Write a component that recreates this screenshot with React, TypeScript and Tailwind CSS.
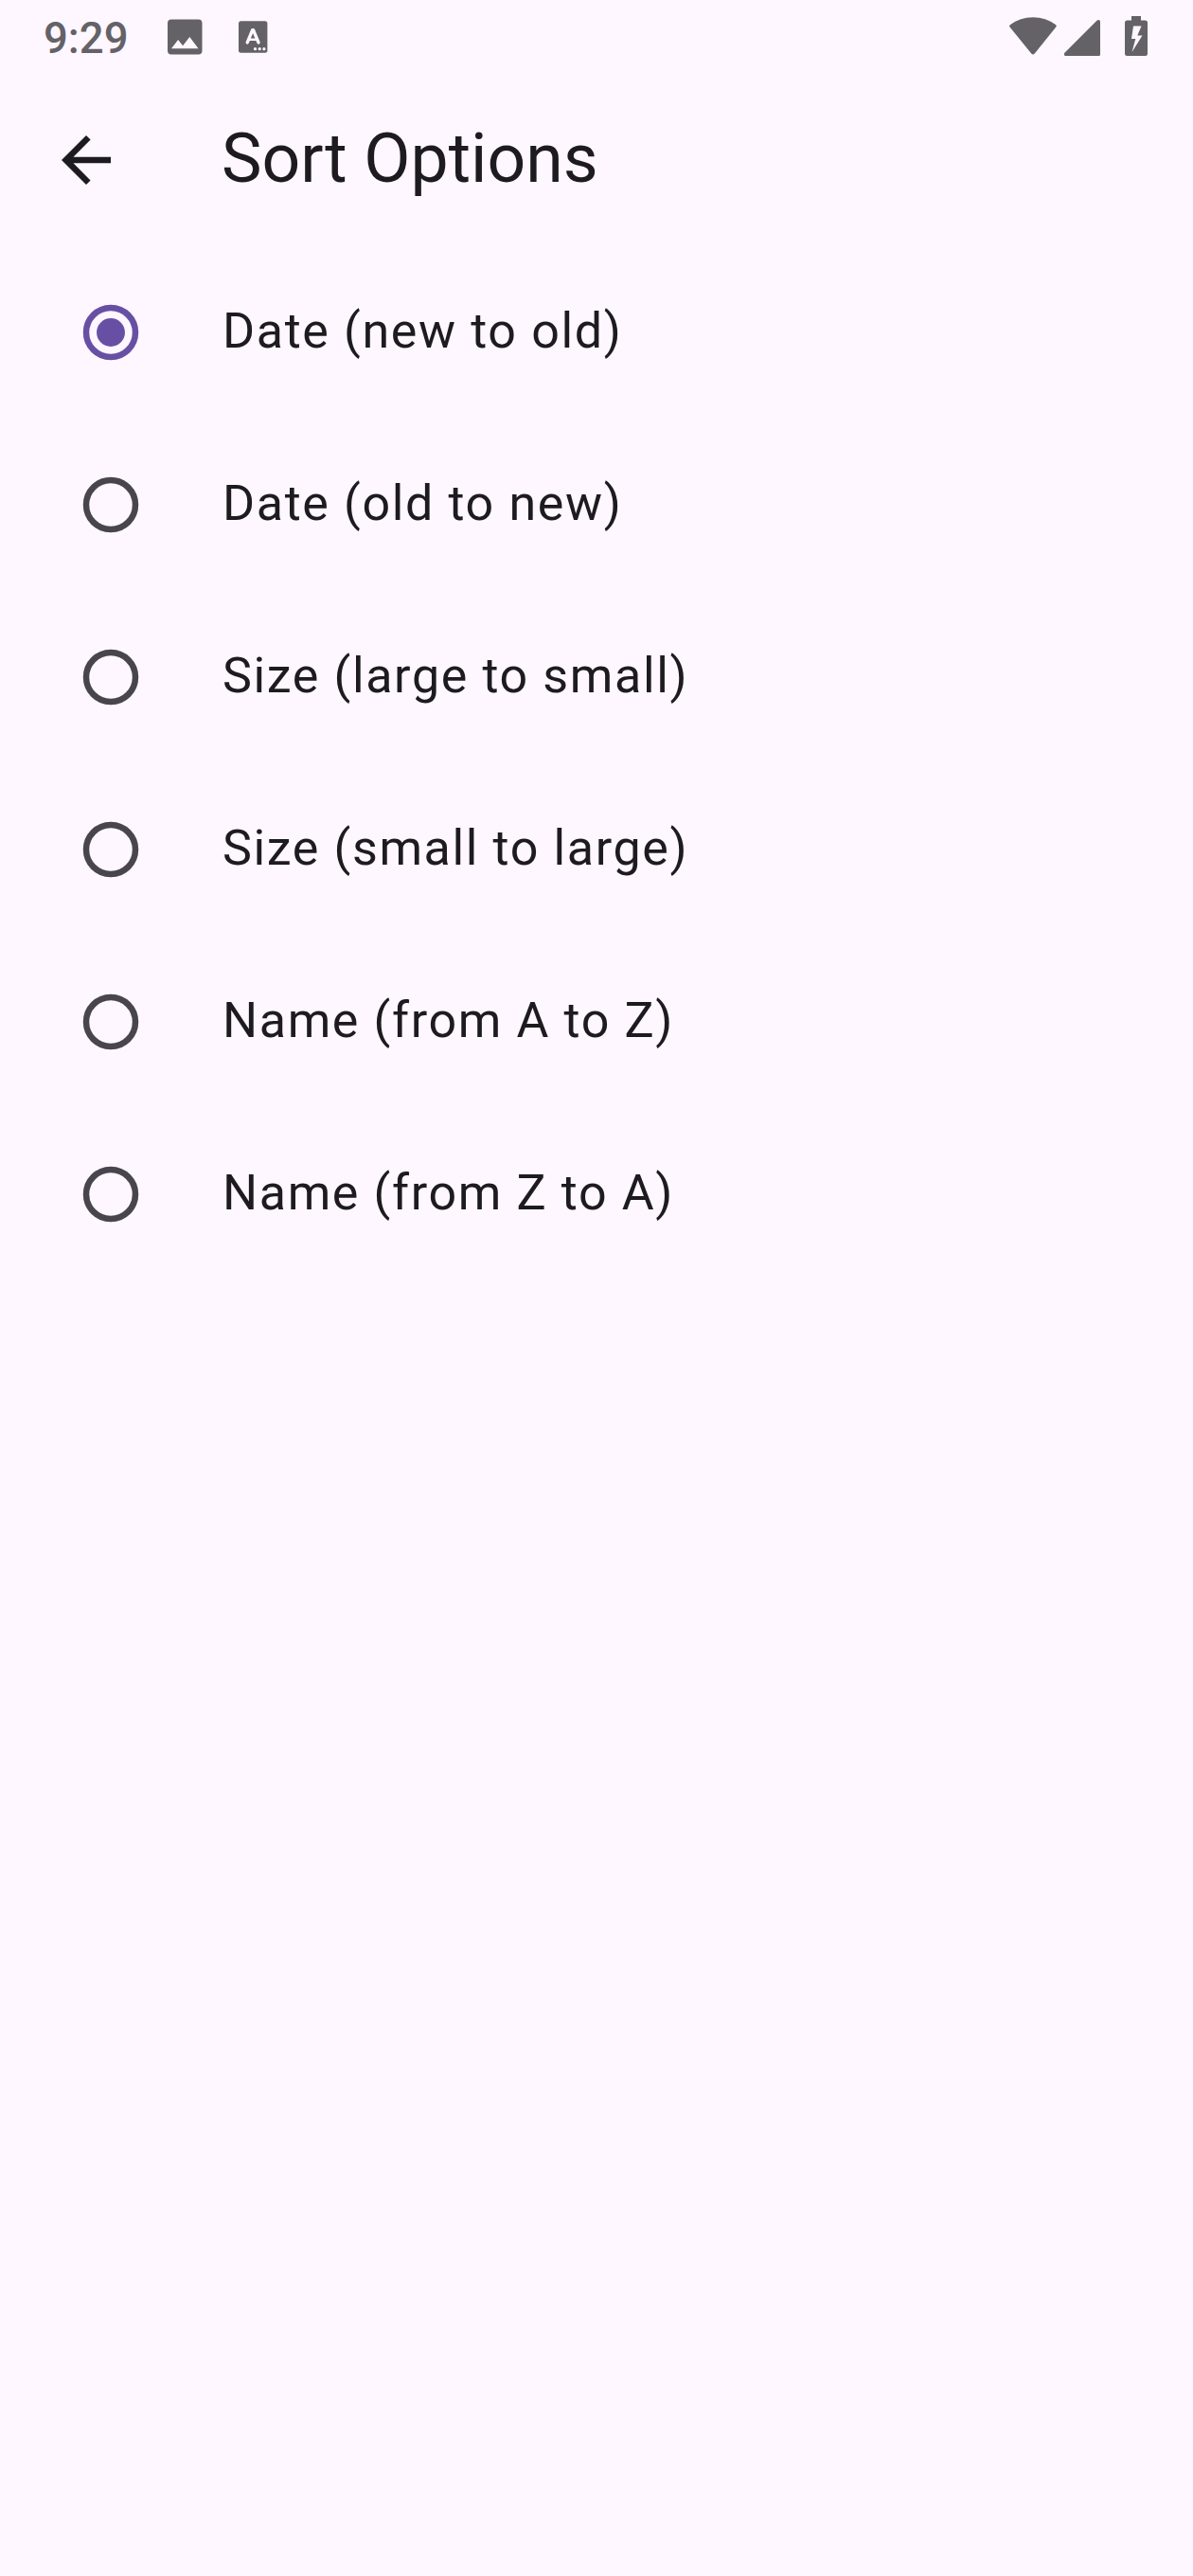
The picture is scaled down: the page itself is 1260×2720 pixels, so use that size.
import { useState } from "react";

const options = [
  "Date (new to old)",
  "Date (old to new)",
  "Size (large to small)",
  "Size (small to large)",
  "Name (from A to Z)",
  "Name (from Z to A)",
];

function StatusBar() {
  return (
    <div className="flex h-[78px] items-start justify-between pl-[46px] pr-[48px] text-[#646267]">
      <div className="flex items-start">
        <span className="mt-[14px] w-[131px] whitespace-nowrap text-[45.5px] font-medium leading-[53px]">9:29</span>
        <svg className="mt-[20px] h-[38px] w-[37px]" viewBox="0 0 37 38" fill="currentColor">
          <path fillRule="evenodd" d="M4 .5h28.5a4 4 0 0 1 4 4v29a4 4 0 0 1-4 4H4a4 4 0 0 1-4-4v-29a4 4 0 0 1 4-4ZM4 31.3h28.5L23.3 19l-7.2 9.2-5-6.1Z" />
        </svg>
        <svg className="ml-[38px] mt-[22px] h-[34px] w-[31px]" viewBox="0 0 31 34" fill="currentColor">
          <rect y=".3" width="30.4" height="33.5" rx="2.5" />
          <g fill="none" stroke="#fef7ff" strokeLinecap="round" strokeLinejoin="round">
            <path d="m9.2 22.900 5.500-13.200h.8l5.500 13.200" strokeWidth="3.4" />
            <path d="M11.500 19.800h7.400" strokeWidth="2.600" />
          </g>
          <g fill="#fef7ff">
            <circle cx="17.5" cy="29.7" r="1.6" />
            <circle cx="22.2" cy="29.7" r="1.6" />
            <circle cx="26.9" cy="29.7" r="1.6" />
          </g>
        </svg>
      </div>
      <div className="flex items-start">
        <svg className="mt-[17px] h-[42px] w-[50px]" viewBox="0 0 50 42" fill="currentColor">
          <path d="M.8 9.2C7.8 4 16 1.2 25 1.2S42.200 4 49.200 9.200q1 1 .1 2.200L26.800 39.400q-1.800 2-3.600 0L.5 11.400Q-.2 10.200.8 9.200Z" />
        </svg>
        <svg className="ml-[8px] mt-[20px] h-[39px] w-[38px]" viewBox="0 0 38 39" fill="currentColor">
          <path d="M.7 35.500 34.700 1.500Q36 .5 37.200 1.200q.8.5.8 1.500V37.500Q38 39 36.500 39H1.500Q-.6 39 0 36.500Z" />
        </svg>
        <svg className="ml-[26px] mt-[17px] h-[42px] w-[24px]" viewBox="0 0 24 42" fill="currentColor">
          <path fillRule="evenodd" d="M7 0h10v4.500h4.500Q24 4.500 24 7v32.500q0 2.500-2.500 2.500h-19Q0 42 0 39.500V7q0-2.500 2.500-2.500H7ZM9 10.500 7 24h4.300L7.500 38 18.500 20.500h-5.200L17.500 10.500Z" />
        </svg>
      </div>
    </div>
  );
}

function Radio({ checked }: { checked: boolean }) {
  return (
    <svg className={checked ? "h-[78px] w-[78px] text-[#6750a4]" : "h-[78px] w-[78px] text-[#49454f]"} viewBox="0 0 24 24">
      <circle cx="12" cy="12" r="8" fill="none" stroke="currentColor" strokeWidth="2" />
      {checked && <circle cx="12" cy="12" r="4.600" fill="currentColor" />}
    </svg>
  );
}

export default function App() {
  const [selected, setSelected] = useState(0);

  return (
    <div className="h-[2720px] w-[1260px] bg-[#fef7ff] text-[#1d1b20] [font-family:Roboto,sans-serif]">
      <StatusBar />
      <header className="flex h-[182px] items-center pl-[52px]">
        <button aria-label="Back" className="h-[78px] w-[78px]">
          <svg className="h-[78px] w-[78px]" viewBox="0 0 24 24" fill="currentColor">
            <path d="M20 11H7.830l5.590-5.590L12 4l-8 8 8 8 1.410-1.410L7.830 13H20v-2z" />
          </svg>
        </button>
        <h1 className="ml-[104px] mt-[-4px] whitespace-nowrap text-[71.5px] leading-[91px]">Sort Options</h1>
      </header>
      <ul>
        {options.map((label, i) => (
          <li key={label}>
            <button
              role="radio"
              aria-checked={selected === i}
              onClick={() => setSelected(i)}
              className="flex h-[182px] w-full items-center pl-[78px] text-left"
            >
              <Radio checked={selected === i} />
              <span className="ml-[79px] mt-[-2px] whitespace-nowrap text-[52px] leading-[78px] tracking-[1.625px]">{label}</span>
            </button>
          </li>
        ))}
      </ul>
    </div>
  );
}
